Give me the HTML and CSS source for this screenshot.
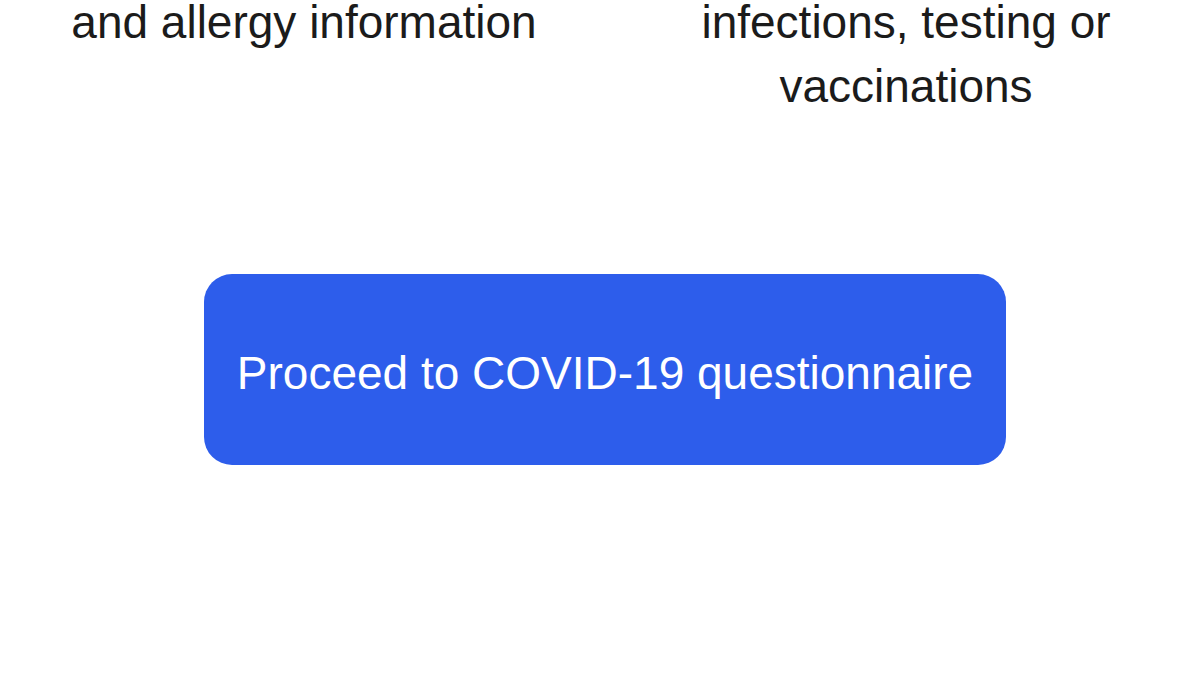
FILE: index.html
```html
<!DOCTYPE html>
<html lang="en">
<head>
<meta charset="utf-8">
<title>COVID-19 questionnaire</title>
<link rel="stylesheet" href="styles.css">
</head>
<body>
<main class="page">
  <section class="cols">
    <p class="col-text">and allergy information</p>
    <p class="col-text">infections, testing or vaccinations</p>
  </section>
  <div class="actions">
    <button class="proceed" type="button">Proceed to COVID-19 questionnaire</button>
  </div>
</main>
</body>
</html>
```
FILE: styles.css
```css
html, body {
  margin: 0;
  padding: 0;
  background: #ffffff;
}
body {
  width: 1200px;
  height: 675px;
  overflow: hidden;
  font-family: "Liberation Sans", Arial, sans-serif;
  color: #1b1b1b;
}
.page {
  display: flex;
  flex-direction: column;
}
.cols {
  display: grid;
  grid-template-columns: 562px 562px;
  column-gap: 40px;
  padding: 0 13px 0 23px;
  margin-top: -10px;
}
.col-text {
  margin: 0;
  font-size: 46px;
  line-height: 64px;
  text-align: center;
}
.actions {
  display: flex;
  justify-content: center;
  padding-left: 10px;
  margin-top: 156px;
}
.proceed {
  width: 802px;
  height: 191px;
  border: none;
  border-radius: 28px;
  background: #2d5deb;
  color: #ffffff;
  font-family: "Liberation Sans", Arial, sans-serif;
  font-size: 46px;
  padding: 6px 0 0;
  cursor: pointer;
}
```
